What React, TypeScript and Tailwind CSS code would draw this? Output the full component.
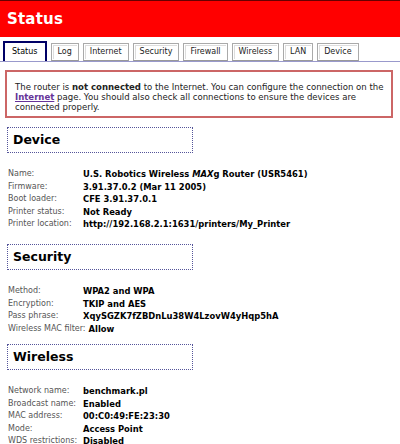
import React from "react";

const tabs = ["Status", "Log", "Internet", "Security", "Firewall", "Wireless", "LAN", "Device"];

type Row = [string, React.ReactNode];

const device: Row[] = [
  ["Name:", <>U.S. Robotics Wireless <i>MAX</i>g Router (USR5461)</>],
  ["Firmware:", "3.91.37.0.2 (Mar 11 2005)"],
  ["Boot loader:", "CFE 3.91.37.0.1"],
  ["Printer status:", "Not Ready"],
  ["Printer location:", "http://192.168.2.1:1631/printers/My_Printer"],
];

const security: Row[] = [
  ["Method:", "WPA2 and WPA"],
  ["Encryption:", "TKIP and AES"],
  ["Pass phrase:", "XqySGZK7fZBDnLu38W4LzovW4yHqp5hA"],
  ["Wireless MAC filter:", "Allow"],
];

const wireless: Row[] = [
  ["Network name:", "benchmark.pl"],
  ["Broadcast name:", "Enabled"],
  ["MAC address:", "00:C0:49:FE:23:30"],
  ["Mode:", "Access Point"],
  ["WDS restrictions:", "Disabled"],
];

function Section({ title, rows, top }: { title: string; rows: Row[]; top: string }) {
  return (
    <div className={top}>
      <div className="ml-[7px] w-[186px] h-[26px] border border-dotted border-[#55559a] flex items-center pl-[5px]">
        <span className="text-[12.5px] font-bold text-black">{title}</span>
      </div>
      <div className="mt-[15px] ml-[8px] flex flex-col">
        {rows.map(([k, v]) => (
          <div key={k} className="flex h-[12.5px] items-center leading-none whitespace-nowrap">
            <span className="min-w-[75px] pr-[3px] text-[8px] text-[#555]">{k}</span>
            <span className="font-bold text-[8.4px] text-black">{v}</span>
          </div>
        ))}
      </div>
    </div>
  );
}

export default function App() {
  return (
    <div className="w-[400px] h-[444px] bg-white overflow-hidden" style={{ fontFamily: '"DejaVu Sans", Verdana, sans-serif' }}>
      <div className="h-[37px] bg-[#ff0000] border-t border-[#600] flex items-center pl-[7px]">
        <span className="text-white font-bold text-[15px] tracking-[0.2px]">Status</span>
      </div>
      <div className="mt-[5px] flex items-end gap-[4px] pl-[3px] border-b border-[#9999cc] h-[20px]">
        {tabs.map((t, i) =>
          i === 0 ? (
            <div key={t} className="h-[20px] px-[7px] border-2 border-b-0 border-[#000066] flex items-center text-[8px] text-black">
              {t}
            </div>
          ) : (
            <div key={t} className="h-[18px] px-[6px] border border-[#aaa] border-b-[#999] flex items-center text-[8px] text-[#222] shadow-[inset_0_0_0_1px_#fff,inset_1px_1px_0_1px_#ddd]">
              {t}
            </div>
          )
        )}
      </div>
      <div className="ml-[5px] mr-[7px] mt-[8px] h-[48px] border-2 border-[#cc6666] pl-[8px] pr-[1px] pt-[10px] text-[8.55px] leading-[10px] text-[#222]">
        The router is <b>not connected</b> to the Internet. You can configure the connection on the{" "}
        <a className="font-bold text-[#663399] underline">Internet</a> page. You should also check all connections to ensure the devices are connected properly.
      </div>
      <Section top="mt-[9px]" title="Device" rows={device} />
      <Section top="mt-[13.5px]" title="Security" rows={security} />
      <Section top="mt-[9px]" title="Wireless" rows={wireless} />
    </div>
  );
}
